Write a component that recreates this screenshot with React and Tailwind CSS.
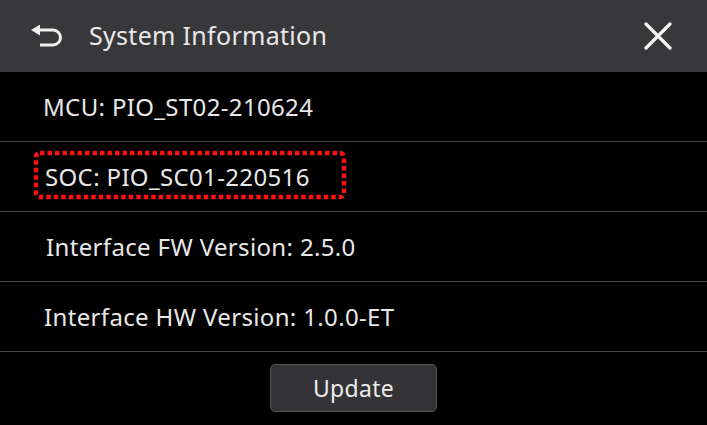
export default function App() {
  const rows = [
    { text: 'MCU: PIO_ST02-210624', pad: 'pl-[43px]' },
    { text: 'SOC: PIO_SC01-220516', pad: 'pl-[45px]', marked: true },
    { text: 'Interface FW Version: 2.5.0', pad: 'pl-[46px]' },
    { text: 'Interface HW Version: 1.0.0-ET', pad: 'pl-[44px]' },
  ]

  return (
    <div className="w-[707px] h-[425px] bg-black flex flex-col text-[#e8e8e8] overflow-hidden" style={{ fontFamily: '"Noto Sans", "Open Sans", sans-serif' }}>
      {/* header */}
      <div className="h-[72px] bg-[#38383b] flex items-center shrink-0">
        <svg width="32" height="22" viewBox="0 0 32 22" className="ml-[31px]">
          <path d="M0 5 L9 -0.5 L9 10.5 Z" fill="#f0f0f0" />
          <path d="M7 5 H22 a7.5 7.5 0 0 1 0 15 H9" fill="none" stroke="#f0f0f0" strokeWidth="3" />
        </svg>
        <span className="ml-[26px] text-[25px] tracking-[0.3px]">System Information</span>
        <svg width="28" height="28" viewBox="0 0 28 28" className="ml-auto mr-[35px]">
          <path d="M2 2 L26 26 M26 2 L2 26" stroke="#f5f5f5" strokeWidth="3.2" strokeLinecap="round" />
        </svg>
      </div>

      {rows.map((r) => (
        <div key={r.text} className={`h-[70px] shrink-0 flex items-center border-b border-[#464646] ${r.pad} relative`}>
          <span className="text-[24px] tracking-[0.35px]">{r.text}</span>
          {r.marked && (
            <svg className="absolute left-[33px] top-[8px]" width="314" height="50" viewBox="0 0 314 50">
              <rect x="3" y="3" width="308" height="44" rx="4" fill="none" stroke="#ff1010" strokeWidth="4.5" strokeDasharray="4.5 3" />
            </svg>
          )}
        </div>
      ))}

      <div className="flex-1 flex items-start justify-center pt-[12px]">
        <button className="w-[167px] h-[48px] bg-[#333335] border border-[#555] rounded-[5px] text-[23px] text-[#ececec] tracking-[0.3px]">
          Update
        </button>
      </div>
    </div>
  )
}
